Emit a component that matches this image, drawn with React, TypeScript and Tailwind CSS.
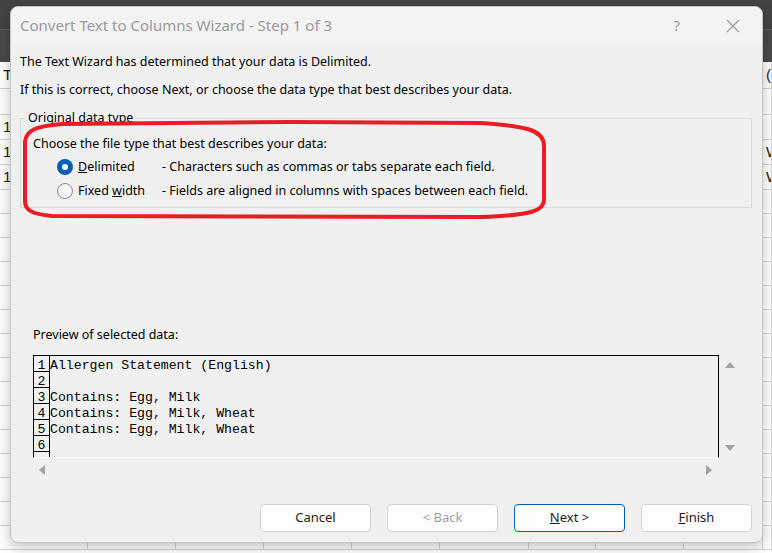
const COLS = [88, 88, 88, 88, 88, 89, 67, 88, 79, 9];

const ROWS: { h: number; a?: string; last?: string }[] = [
  { h: 27, a: "T", last: "(" },
  { h: 26 },
  { h: 25, a: "1" },
  { h: 25, a: "1", last: "W" },
  { h: 25, a: "1", last: "W" },
  ...Array.from({ length: 15 }, () => ({ h: 24 })),
];

const ui = { fontFamily: '"Noto Sans", "Open Sans", sans-serif' };
const mono = { fontFamily: '"Liberation Mono", "Courier New", monospace' };

function Sheet() {
  return (
    <div className="absolute inset-0 bg-white">
      <div className="h-[29px] bg-[#444444]" />
      <div className="h-px bg-[#5c5c5c]" />
      <div className="h-[32px] bg-[#4a4a4a]" />
      {ROWS.map((r, i) => (
        <div key={i} className="flex" style={{ height: r.h }}>
          {COLS.map((w, j) => (
            <div
              key={j}
              className="shrink-0 border-r border-b border-[#d4d4d4] overflow-hidden whitespace-nowrap text-[15px] text-[#1a1a1a] pl-[3px] flex items-center"
              style={{ width: w, fontFamily: '"Liberation Sans", Arial, sans-serif' }}
            >
              {j === 0 ? r.a : j === 9 ? r.last : null}
            </div>
          ))}
        </div>
      ))}
    </div>
  );
}

function Radio({ on }: { on: boolean }) {
  return on ? (
    <span className="w-4 h-4 rounded-full bg-[#005fb8] flex items-center justify-center shrink-0">
      <span className="w-[6px] h-[6px] rounded-full bg-white" />
    </span>
  ) : (
    <span className="w-4 h-4 rounded-full border border-[#8a8a8a] bg-[#f7f7f7] shrink-0" />
  );
}

function Tri({ dir }: { dir: "up" | "down" | "left" | "right" }) {
  const pts = {
    up: "0,8 5,2 10,8",
    down: "0,2 5,8 10,2",
    left: "8,0 2,5 8,10",
    right: "2,0 8,5 2,10",
  }[dir];
  return (
    <svg width="10" height="10" viewBox="0 0 10 10">
      <polygon points={pts} fill="#a2a2a2" />
    </svg>
  );
}

function Btn({ children, disabled, focus }: { children: React.ReactNode; disabled?: boolean; focus?: boolean }) {
  return (
    <div
      className={`w-[111px] h-[28px] rounded-[4px] bg-[#fdfdfd] border flex items-center justify-center text-[13px] ${
        focus ? "border-[#005fb8]" : "border-[#d3d3d3]"
      } ${disabled ? "text-[#9d9d9d]" : "text-[#1b1b1b]"}`}
    >
      {children}
    </div>
  );
}

const PREVIEW = [
  "Allergen Statement (English)",
  "",
  "Contains: Egg, Milk",
  "Contains: Egg, Milk, Wheat",
  "Contains: Egg, Milk, Wheat",
  "",
  "",
];

export default function App() {
  return (
    <div className="relative w-[772px] h-[553px] overflow-hidden" style={ui}>
      <Sheet />

      {/* wizard dialog */}
      <div className="absolute left-[10px] top-[6px] w-[753px] h-[537px] rounded-[8px] bg-[#f0f0f0] border border-[#c4c4c4] shadow-[0_4px_14px_rgba(0,0,0,0.25)] overflow-hidden flex flex-col text-black">
        <div className="h-[37px] bg-[#f3f3f3] flex items-center pl-[9px] shrink-0">
          <span className="text-[15px] text-[#9a9a9a] flex-1">Convert Text to Columns Wizard - Step 1 of 3</span>
          <span className="text-[15px] text-[#9a9a9a] mr-[46px]">?</span>
          <svg width="14" height="14" viewBox="0 0 14 14" className="mr-[22px]">
            <path d="M1 1L13 13M13 1L1 13" stroke="#9a9a9a" strokeWidth="1.1" />
          </svg>
        </div>

        <div className="pl-[9px] pr-[10px] flex flex-col text-[12.5px]">
          <div className="mt-[8px] h-[20px] leading-[20px]">The Text Wizard has determined that your data is Delimited.</div>
          <div className="mt-[8px] h-[20px] leading-[20px]">If this is correct, choose Next, or choose the data type that best describes your data.</div>

          {/* group box */}
          <div className="relative mt-[18px] h-[90px] border border-[#dadada] pl-[12px] pt-[16px]">
            <span className="absolute left-[4px] -top-[10px] px-[3px] bg-[#f0f0f0] leading-[18px]">Original data type</span>
            <div className="h-[18px] leading-[18px]">Choose the file type that best describes your data:</div>
            <div className="mt-[2px] flex items-center h-[24px] pl-[24px]">
              <Radio on />
              <span className="ml-[5px] w-[84px] shrink-0"><u>D</u>elimited</span>
              <span>- Characters such as commas or tabs separate each field.</span>
            </div>
            <div className="flex items-center h-[24px] pl-[24px]">
              <Radio on={false} />
              <span className="ml-[5px] w-[84px] shrink-0">Fixed <u>w</u>idth</span>
              <span>- Fields are aligned in columns with spaces between each field.</span>
            </div>
          </div>

          <div className="mt-[118px] ml-[13px] h-[18px] leading-[18px]">Preview of selected data:</div>

          {/* preview */}
          <div className="mt-[11px] ml-[13px] flex">
            <div className="flex flex-col">
              <div className="w-[686px] h-[103px] border border-black border-b-white overflow-hidden" style={mono}>
                {PREVIEW.map((t, i) => (
                  <div key={i} className="flex h-[16px] text-[13.2px] leading-[16px]">
                    <div className="w-[16px] shrink-0 border-r border-b border-black text-center pt-[3px] leading-[14px] overflow-hidden">
                      {i < 6 ? i + 1 : ""}
                    </div>
                    <div className="whitespace-pre pt-[3px] leading-[14px]">{t}</div>
                  </div>
                ))}
              </div>
              <div className="h-[23px] flex items-center justify-between pl-[4px] pr-[5px]">
                <Tri dir="left" />
                <Tri dir="right" />
              </div>
            </div>
            <div className="w-[22px] h-[103px] flex flex-col items-center justify-between pt-[5px] pb-[5px]">
              <Tri dir="up" />
              <Tri dir="down" />
            </div>
          </div>

          {/* buttons */}
          <div className="mt-[23px] flex justify-end gap-[16px]">
            <Btn>Cancel</Btn>
            <Btn disabled>&lt; Back</Btn>
            <Btn focus>
              <span><u>N</u>ext &gt;</span>
            </Btn>
            <Btn>
              <span><u>F</u>inish</span>
            </Btn>
          </div>
        </div>
      </div>

      {/* red annotation */}
      <svg className="absolute left-0 top-0 pointer-events-none" width="772" height="553">
        <path
          d="M62 124 C36 126 26 130 25 142 L25 201 C25 210 31 214 52 216 L482 217 C534 215 544 210 544 200 L544 146 C544 131 530 126 480 123 L290 122 Z"
          fill="none"
          stroke="#ed1c24"
          strokeWidth="4"
        />
      </svg>
    </div>
  );
}
